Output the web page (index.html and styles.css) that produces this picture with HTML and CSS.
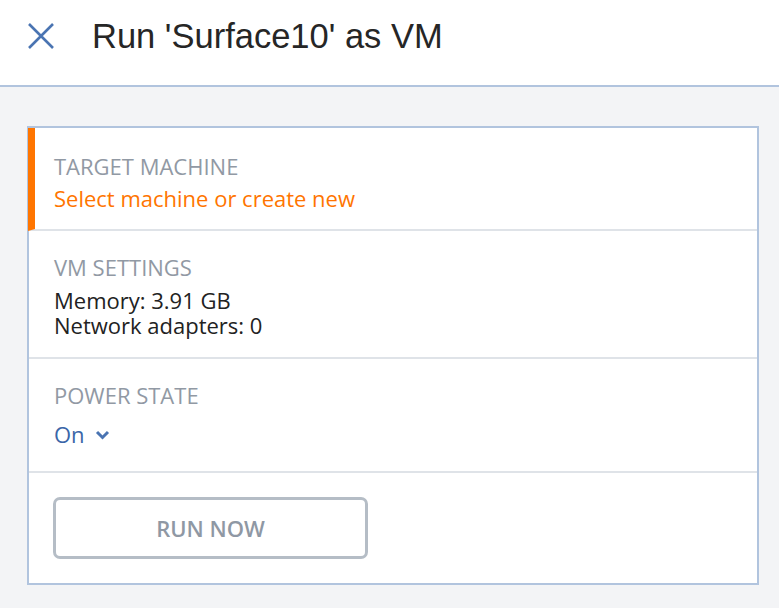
FILE: index.html
```html
<!DOCTYPE html>
<html lang="en">
<head>
    <meta charset="UTF-8">
    <meta name="viewport" content="width=device-width, initial-scale=1.0">
    <title>Run as VM</title>
    <link rel="stylesheet" href="styles.css">
</head>
<body>
    <header class="topbar">
        <div class="close">
            <svg width="28" height="28" viewBox="0 0 28 28">
                <path d="M2 2 L26 26 M26 2 L2 26" stroke="#4a74b2" stroke-width="2.6" fill="none"/>
            </svg>
        </div>
        <h1>Run 'Surface10' as VM</h1>
    </header>
    <div class="content">
        <div class="panel">
            <div class="section active">
                <div class="label">TARGET MACHINE</div>
                <a href="#" class="link">Select machine or create new</a>
            </div>
            <div class="section settings">
                <div class="label">VM SETTINGS</div>
                <div class="value">Memory: 3.91 GB</div>
                <div class="value">Network adapters: 0</div>
            </div>
            <div class="section power">
                <div class="label">POWER STATE</div>
                <div class="dropdown">On
                    <svg width="15" height="10" viewBox="0 0 15 10">
                        <path d="M2 2 L7.5 7.5 L13 2" stroke="#4a74b2" stroke-width="3" fill="none"/>
                    </svg>
                </div>
            </div>
            <div class="section last">
                <button class="btn-run">RUN NOW</button>
            </div>
        </div>
    </div>
</body>
</html>
```
FILE: styles.css
```css
body {
    margin: 0;
    padding: 0;
    font-family: "Open Sans", sans-serif;
    background-color: #f3f4f6;
}
.topbar {
    background-color: white;
    height: 63px;
    border-bottom: 2px solid #b1c4de;
    display: flex;
    align-items: flex-start;
    padding: 22px 0 0 27px;
}
.close {
    width: 28px;
    height: 28px;
    margin-right: 37px;
}
.topbar h1 {
    margin: -6px 0 0 0;
    font-family: "Liberation Sans", Arial, sans-serif;
    font-weight: normal;
    font-size: 34.5px;
    line-height: 40px;
    color: #262626;
}
.content {
    padding: 39px 20px 24px 27px;
}
.panel {
    width: 728px;
    background-color: white;
    border: 2px solid #b1c4de;
}
.section {
    padding: 24px 25px 19px 25px;
    border-bottom: 2px solid #dfe3e8;
}
.section.active {
    border-left: 7px solid #ff7500;
    padding: 26px 25px 18px 19px;
    margin-left: -1px;
}
.section.power {
    padding-bottom: 24px;
}
.section.last {
    border-bottom: none;
    padding-bottom: 24px;
}
.label {
    font-size: 22px;
    line-height: 25px;
    color: #9199a4;
    margin-bottom: 7px;
}
.settings .label {
    margin-bottom: 8px;
}
.link {
    display: block;
    font-size: 22px;
    line-height: 25px;
    color: #ff7500;
    text-decoration: none;
}
.value {
    font-size: 22px;
    line-height: 25px;
    color: #222;
}
.power .label {
    margin-bottom: 14px;
}
.dropdown {
    font-size: 22px;
    line-height: 25px;
    color: #3a66a8;
    display: flex;
    align-items: center;
    gap: 10px;
}
.btn-run {
    width: 315px;
    height: 62px;
    margin-left: -1px;
    background: white;
    border: 3px solid #b5bdc6;
    border-radius: 7px;
    font-family: "Open Sans", sans-serif;
    font-size: 22px;
    font-weight: 600;
    color: #8f98a4;
    cursor: pointer;
}
```
